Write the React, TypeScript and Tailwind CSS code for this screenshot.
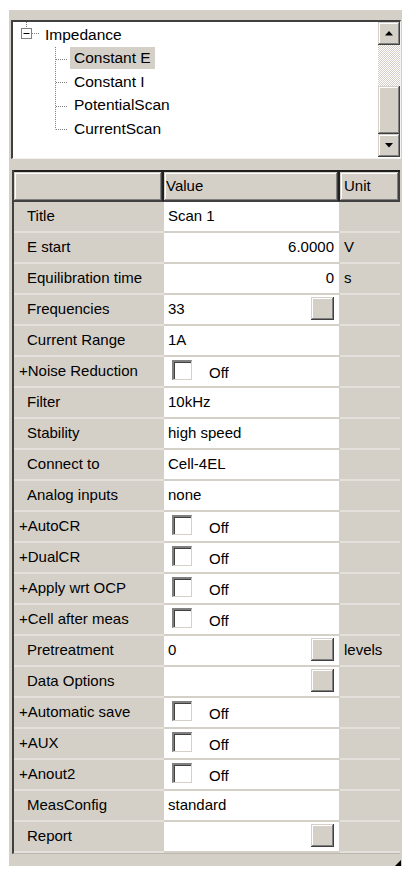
import type { ReactNode } from 'react'

type Row = {
  name: string
  value?: string
  right?: boolean
  unit?: string
  check?: boolean
  button?: boolean
}

const rows: Row[] = [
  { name: 'Title', value: 'Scan 1' },
  { name: 'E start', value: '6.0000', right: true, unit: 'V' },
  { name: 'Equilibration time', value: '0', right: true, unit: 's' },
  { name: 'Frequencies', value: '33', button: true },
  { name: 'Current Range', value: '1A' },
  { name: '+Noise Reduction', check: true },
  { name: 'Filter', value: '10kHz' },
  { name: 'Stability', value: 'high speed' },
  { name: 'Connect to', value: 'Cell-4EL' },
  { name: 'Analog inputs', value: 'none' },
  { name: '+AutoCR', check: true },
  { name: '+DualCR', check: true },
  { name: '+Apply wrt OCP', check: true },
  { name: '+Cell after meas', check: true },
  { name: 'Pretreatment', value: '0', button: true, unit: 'levels' },
  { name: 'Data Options', button: true },
  { name: '+Automatic save', check: true },
  { name: '+AUX', check: true },
  { name: '+Anout2', check: true },
  { name: 'MeasConfig', value: 'standard' },
  { name: 'Report', button: true },
]

const treeChildren = ['Constant E', 'Constant I', 'PotentialScan', 'CurrentScan']

const bevel =
  'bg-[#d4d0c8] shadow-[inset_-1px_-1px_#404040,inset_1px_1px_#d4d0c8,inset_-2px_-2px_#808080,inset_2px_2px_#ffffff]'

function ScrollButton({ children }: { children: ReactNode }) {
  return <div className={`flex h-[23px] items-center justify-center ${bevel}`}>{children}</div>
}

function Arrow({ down }: { down?: boolean }) {
  return (
    <svg width="8" height="5" viewBox="0 0 8 5">
      <path d={down ? 'M0 0h8L4 4.5z' : 'M0 4.5h8L4 0z'} fill="#000" />
    </svg>
  )
}

function Tree() {
  return (
    <div className="mx-[2px] mr-[1px] flex h-[139px] border-t-2 border-l-2 border-t-[#404040] border-l-[#404040] border-r border-b border-r-[#f4f2ee] border-b-[#f4f2ee] bg-white">
      <div className="relative flex-1 pt-[1px] text-[15.5px] text-black">
        {/* connector lines */}
        <svg className="absolute left-0 top-0" width="70" height="120">
          <g stroke="#808080" strokeWidth="1" strokeDasharray="1 1" fill="none">
            <path d="M13.5 0V6" />
            <path d="M19 11.5H27" />
            <path d="M42.5 25V107.5" />
            <path d="M43 37.5H55M43 60.5H55M43 84.5H55M43 107.5H55" />
          </g>
          <rect x="8.5" y="6.5" width="10" height="10" fill="#fff" stroke="#808080" />
          <path d="M10.5 11.5H16.5" stroke="#000" />
        </svg>
        <div className="flex h-[23.5px] items-center pl-[32px]">Impedance</div>
        {treeChildren.map((c, i) => (
          <div key={c} className="flex h-[23.5px] items-center pl-[57px]">
            <span className={`px-[4px] leading-[22px] ${i === 0 ? 'bg-[#d4d0c8]' : ''}`}>{c}</span>
          </div>
        ))}
      </div>
      <div className="flex w-[22px] flex-col">
        <ScrollButton>
          <Arrow />
        </ScrollButton>
        <div className="h-[41px] bg-[repeating-conic-gradient(#ffffff_0_25%,#d4d0c8_0_50%)] bg-[length:2px_2px]" />
        <div className={`h-[48px] ${bevel}`} />
        <ScrollButton>
          <Arrow down />
        </ScrollButton>
      </div>
    </div>
  )
}

function CheckBox() {
  return (
    <div className="mb-[4px] h-[20px] w-[20px] border-t-2 border-l-2 border-t-[#808080] border-l-[#808080] border-r border-b border-r-[#d4d0c8] border-b-[#d4d0c8] bg-white shadow-[inset_1px_1px_#404040]" />
  )
}

function DotsButton() {
  return <div className={`ml-auto mb-[3px] h-[23px] w-[23px] ${bevel}`} />
}

function PropertyGrid() {
  return (
    <div className="ml-[3px] mr-[2px] border-l-2 border-[#404040] border-b border-b-[#bcb8b0] text-[15px] text-black">
      <div className="flex h-[32px] border-t-2 border-t-[#202020] border-b border-b-[#404040]">
        <div className={`w-[150px] border-r-2 border-[#202020] ${bevel}`} />
        <div className={`flex w-[176px] items-center border-r-2 border-[#202020] pl-[2px] ${bevel}`}>Value</div>
        <div className={`flex flex-1 items-center border-r border-[#404040] pl-[4px] ${bevel}`}>Unit</div>
      </div>
      {rows.map((r) => (
        <div key={r.name} className="flex h-[31px]">
          <div
            className={`flex w-[150px] items-center whitespace-nowrap border-b-2 border-[#e4e1dc] bg-[#d4d0c8] ${
              r.name.startsWith('+') ? 'pl-[5px]' : 'pl-[13px]'
            }`}
          >
            {r.name}
          </div>
          <div
            className={`flex w-[176px] items-center border-r border-b-2 border-r-[#d4d0c8] border-b-[#d4d0c8] bg-white pl-[4px] pr-[5px] ${
              r.right ? 'justify-end' : ''
            }`}
          >
            {r.check ? (
              <div className="flex items-center pl-[4px]">
                <CheckBox />
                <span className="mt-[4px] pl-[17px]">Off</span>
              </div>
            ) : (
              r.value && <span>{r.value}</span>
            )}
            {r.button && <DotsButton />}
          </div>
          <div className="flex flex-1 items-center border-b-2 border-[#e4e1dc] bg-[#d4d0c8] pl-[4px]">{r.unit}</div>
        </div>
      ))}
    </div>
  )
}

export default function App() {
  return (
    <div className="h-[878px] w-[411px] bg-white pt-[10px] font-['Liberation_Sans',Arial,sans-serif]">
      <div className="relative ml-[9px] w-[393px] bg-[#d4d0c8] pt-[10px] pb-[12px]">
        <Tree />
        <div className="h-[11px]" />
        <PropertyGrid />
        <svg className="absolute bottom-[0px] right-[1px]" width="6" height="6" viewBox="0 0 6 6">
          <path d="M6 0V6H0z" fill="#000" />
        </svg>
      </div>
    </div>
  )
}
